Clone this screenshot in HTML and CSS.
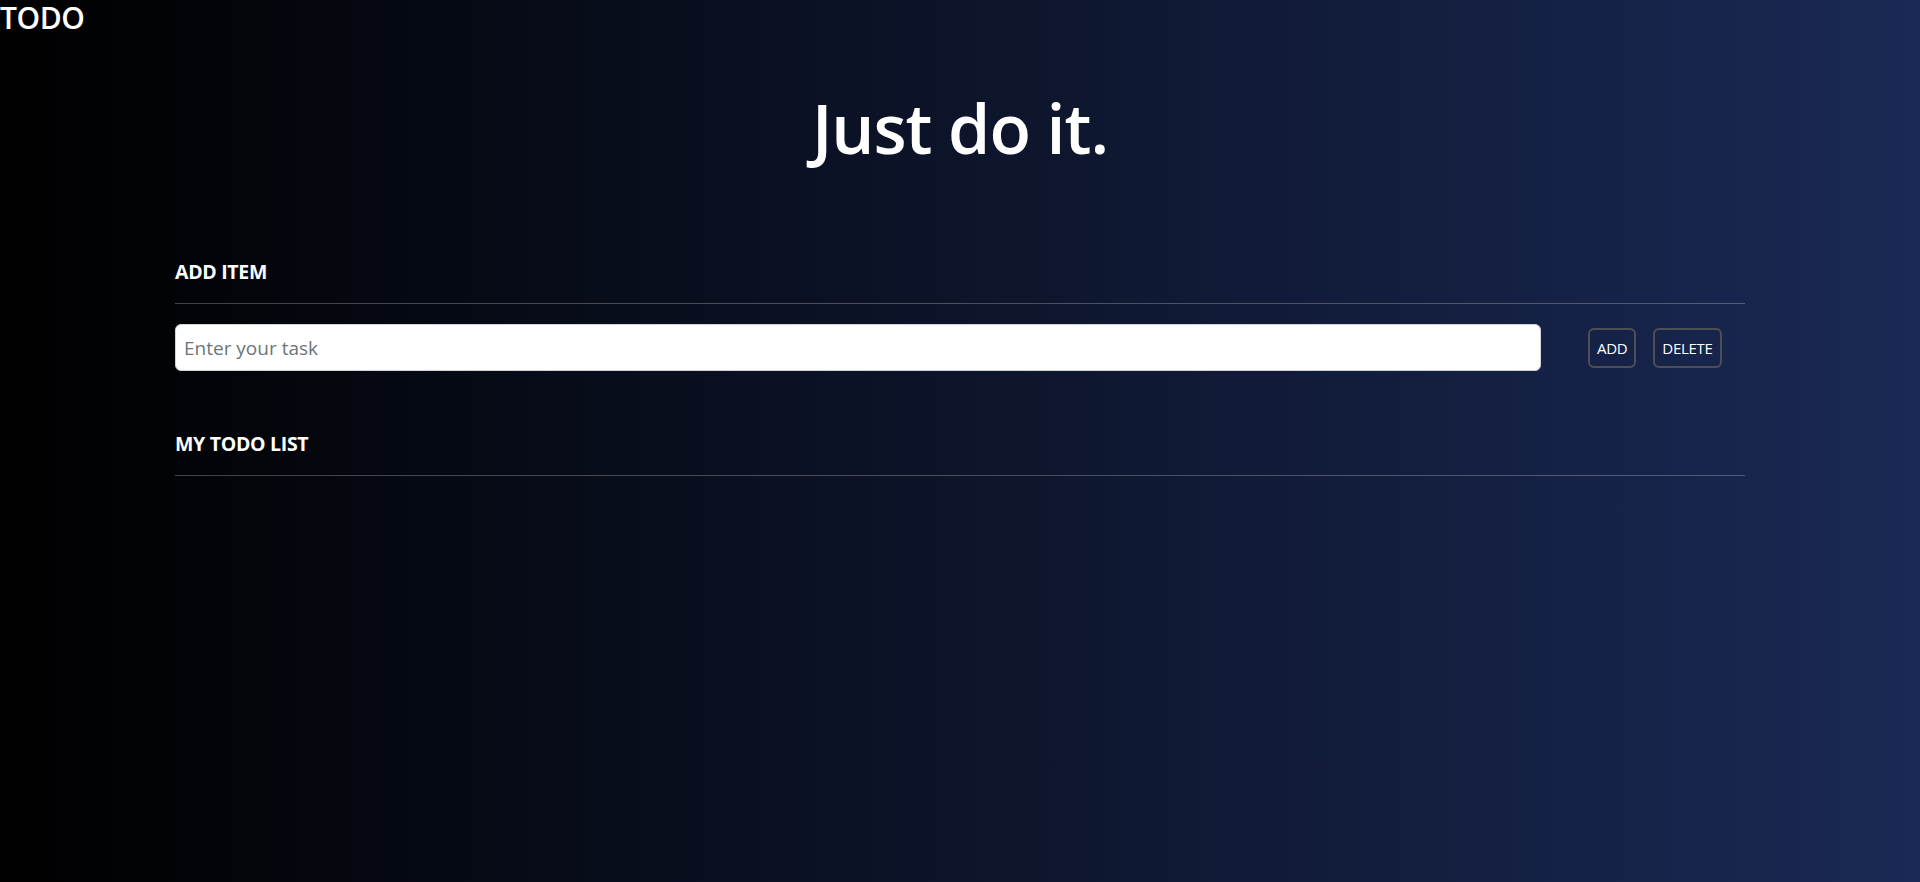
FILE: index.html
```html
<!DOCTYPE html>
<html lang="en">
<head>
<meta charset="utf-8">
<title>TODO</title>
<link rel="stylesheet" href="styles.css">
</head>
<body>
<header class="brand">TODO</header>
<h1 class="title">Just do it.</h1>
<main class="container">
  <section class="section">
    <h2 class="section-title">ADD ITEM</h2>
    <hr class="rule">
    <div class="add-row">
      <input class="task-input" type="text" placeholder="Enter your task">
      <div class="actions">
        <button class="btn" type="button">ADD</button>
        <button class="btn" type="button">DELETE</button>
      </div>
    </div>
  </section>
  <section class="section list-section">
    <h2 class="section-title">MY TODO LIST</h2>
    <hr class="rule">
    <ul class="todo-list"></ul>
  </section>
</main>
</body>
</html>
```
FILE: styles.css
```css
* { box-sizing: border-box; }
html, body { height: 100%; }
body {
  margin: 0;
  min-height: 100vh;
  background: linear-gradient(to right, #000000 0%, #1a2955 100%);
  color: #ffffff;
  font-family: "Open Sans", "Noto Sans", sans-serif;
}
.brand {
  font-size: 30px;
  line-height: 36px;
  font-weight: 600;
  letter-spacing: -0.4px;
}
.title {
  margin: 52px 0 0;
  text-align: center;
  font-size: 68px;
  line-height: 80px;
  font-weight: 600;
  letter-spacing: -1px;
}
.container {
  margin: 0 175px;
}
.section { padding-top: 91px; }
.list-section { padding-top: 60px; }
.section-title {
  margin: 0;
  font-size: 19.5px;
  line-height: 26px;
  font-weight: 700;
  letter-spacing: -0.3px;
}
.rule {
  margin: 18px 0 0;
  border: 0;
  border-top: 1px solid rgba(255, 255, 255, 0.25);
}
.add-row {
  display: flex;
  align-items: center;
  margin-top: 20px;
}
.task-input {
  width: 1366px;
  height: 47px;
  padding: 0 8px;
  border: 1px solid #ced4da;
  border-radius: 6px;
  background: #ffffff;
  font-family: inherit;
  font-size: 19px;
  color: #212529;
  outline: none;
}
.task-input::placeholder { color: #6c757d; }
.actions {
  display: flex;
  gap: 17px;
  margin-left: 47px;
}
.btn {
  height: 40px;
  padding: 0 7px;
  border: 2px solid #4d4f55;
  border-radius: 6px;
  background: transparent;
  color: #ffffff;
  font-family: inherit;
  font-size: 15px;
  letter-spacing: -0.3px;
}
.todo-list { margin: 0; padding: 0; list-style: none; }
```
